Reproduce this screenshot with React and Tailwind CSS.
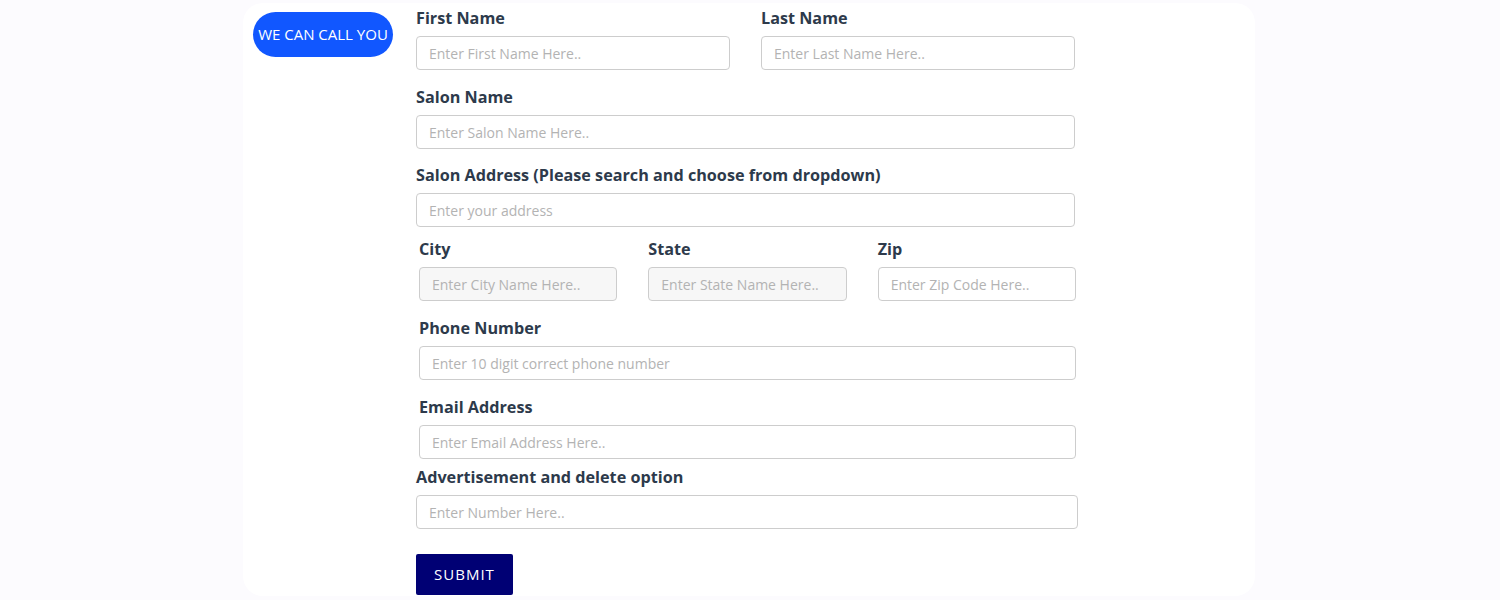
import React from "react";

const Label = ({ children, className = "" }) => (
  <label className={`block h-[24px] text-[16.2px] leading-[24px] font-bold text-[#2d3a4b] ${className}`}>
    {children}
  </label>
);

const Input = ({ placeholder, className = "", muted = false }) => (
  <input
    type="text"
    placeholder={placeholder}
    className={`block h-[34px] rounded-[4px] border border-[#cdcdcd] px-3 text-[14px] text-[#333] placeholder:text-[#b3b3b3] outline-none ${
      muted ? "bg-[#f7f7f7]" : "bg-white"
    } ${className}`}
  />
);

const App = () => {
  return (
    <div className="min-h-[600px] w-full bg-[#fcfbfe] pt-[3px] font-['Open_Sans',sans-serif]">
      <div className="ml-[243px] flex h-[593px] w-[1012px] rounded-[20px] bg-white">
        <div className="w-[173px] shrink-0 pl-[10px] pt-[9px]">
          <div className="flex h-[45px] w-[140px] items-center justify-center rounded-full bg-[#1157ff] text-[15px] text-white">
            WE CAN CALL YOU
          </div>
        </div>

        <form className="w-[662px] pt-[3px]" onSubmit={(e) => e.preventDefault()}>
          <div className="flex gap-[31px]">
            <div>
              <Label>First Name</Label>
              <Input placeholder="Enter First Name Here.." className="mt-[6px] w-[314px]" />
            </div>
            <div>
              <Label>Last Name</Label>
              <Input placeholder="Enter Last Name Here.." className="mt-[6px] w-[314px]" />
            </div>
          </div>

          <Label className="mt-[15px]">Salon Name</Label>
          <Input placeholder="Enter Salon Name Here.." className="mt-[6px] w-[659px]" />

          <Label className="mt-[14px]">Salon Address (Please search and choose from dropdown)</Label>
          <Input placeholder="Enter your address" className="mt-[6px] w-[659px]" />

          <div className="mt-[10px] ml-[3px] grid w-[657px] grid-cols-3 gap-x-[31px]">
            <div>
              <Label>City</Label>
              <Input muted placeholder="Enter City Name Here.." className="mt-[6px] w-full" />
            </div>
            <div>
              <Label>State</Label>
              <Input muted placeholder="Enter State Name Here.." className="mt-[6px] w-full" />
            </div>
            <div>
              <Label>Zip</Label>
              <Input placeholder="Enter Zip Code Here.." className="mt-[6px] w-full" />
            </div>
          </div>

          <div className="ml-[3px]">
            <Label className="mt-[15px]">Phone Number</Label>
            <Input placeholder="Enter 10 digit correct phone number" className="mt-[6px] w-[657px]" />

            <Label className="mt-[15px]">Email Address</Label>
            <Input placeholder="Enter Email Address Here.." className="mt-[6px] w-[657px]" />
          </div>

          <Label className="mt-[6px]">Advertisement and delete option</Label>
          <Input placeholder="Enter Number Here.." className="mt-[6px] w-[662px]" />

          <button
            type="submit"
            className="mt-[25px] h-[41px] w-[97px] rounded-[2px] bg-[#000074] text-[15px] tracking-[1px] text-white"
          >
            SUBMIT
          </button>
        </form>
      </div>
    </div>
  );
};

export default App;
